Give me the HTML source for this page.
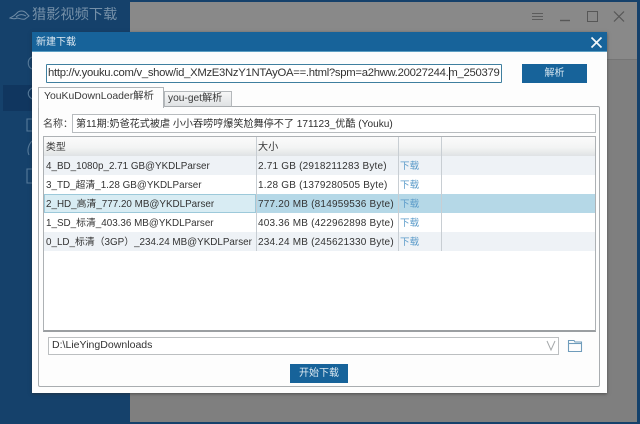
<!DOCTYPE html>
<html lang="zh">
<head>
<meta charset="utf-8">
<style>
html,body{margin:0;padding:0}
body{width:640px;height:424px;overflow:hidden;position:relative;background:#15416b;font-family:"Liberation Sans","Noto Sans CJK SC",sans-serif;font-size:10px;color:#333}
.a{position:absolute;box-sizing:border-box}
.t{position:absolute;white-space:nowrap;line-height:19px;filter:blur(.3px)}
.row{position:absolute;left:1px;width:550px;height:19px}
.c1{left:2px;margin-top:1px;font-size:9.85px}.c2{left:214px;margin-top:1px;letter-spacing:.2px}.c3{left:356px;margin-top:1px;color:#5b9bc9;font-size:9.6px}
.sep{position:absolute;width:1px;background:#c8ced3}
</style>
</head>
<body>
<div class="a" style="left:130px;top:2px;width:507px;height:420px;background:#7f7f7f"></div>
<div class="a" style="left:130px;top:2px;width:507px;height:58px;background:#898989;border-bottom:1px solid #757575"></div>
<div class="a" style="left:3px;top:85px;width:127px;height:26px;background:#10365f"></div>

<svg class="a" style="left:9px;top:8px" width="22" height="14" viewBox="0 0 22 14" fill="none" stroke="#6f8ca6" stroke-width="1"><path d="M1 10C5 8 6 7 9 4C12 2 16 3 18 6L20 8L16 11C13 12 10 10 8 10C6 11 4 11 1 10Z"/><path d="M7 9C10 6 14 6 17 8"/></svg>
<div class="t" style="left:32px;top:6px;font-size:14.2px;color:#7590a8;line-height:18px">猎影视频下载</div>

<svg class="a" style="left:25px;top:55px" width="8" height="130" viewBox="0 0 8 130" fill="none" stroke="#567a9a" stroke-width="1.1"><path d="M7 2C2 4 2 12 7 14"/><path d="M7 33C2 36 2 41 7 44"/><path d="M7 64H2V76H7"/><path d="M7 86C3 90 2 96 4 100"/><path d="M7 114H2V128H7"/></svg>

<svg class="a" style="left:530px;top:9px" width="100" height="15" viewBox="0 0 100 15" fill="none" stroke="#575757" stroke-width="1"><path d="M2 4.5H13M2 7.5H13M2 10.5H13" stroke="#5c5c5c"/><path d="M30 11.5H40" stroke-width="1.4"/><rect x="57.5" y="2.5" width="10" height="10"/><path d="M84 2.5L94 12.5M94 2.5L84 12.5" stroke-width="1.2"/></svg>

<!-- dialog -->
<div class="a" style="left:32px;top:32px;width:575px;height:361px;background:#fdfdfd;box-shadow:0 1px 3px rgba(40,40,40,.55)"></div>
<div class="a" style="left:32px;top:32px;width:575px;height:20px;background:#17639a;border-bottom:1px solid #5d9fc4"></div>
<div class="t" style="left:36px;top:33px;color:#dfeaf2;font-size:10px">新建下载</div>
<svg class="a" style="left:590px;top:36px" width="13" height="13" viewBox="0 0 13 13" fill="none" stroke="#f2f7fa" stroke-width="1.7"><path d="M1.5 1.5L11.5 11.5M11.5 1.5L1.5 11.5"/></svg>

<div class="a" style="left:46px;top:64px;width:456px;height:19px;background:#fff;border:1px solid #3f7f9f;border-radius:1px"></div>
<div class="t" style="left:48px;top:64px;width:453px;overflow:hidden;font-size:11.3px;color:#333;letter-spacing:-.29px">http://v.youku.com/v_show/id_XMzE3NzY1NTAyOA==.html?spm=a2hww.20027244.m_250379</div>
<div class="a" style="left:449px;top:67px;width:1px;height:13px;background:#222"></div>
<div class="a" style="left:522px;top:64px;width:65px;height:19px;background:#17639a"></div>
<div class="t" style="left:522px;top:64px;width:65px;text-align:center;color:#d5e5ef">解析</div>

<!-- tab panel -->
<div class="a" style="left:38px;top:106px;width:562px;height:281px;border:1px solid #a9adb0;border-radius:2px;background:#fdfdfd"></div>
<div class="a" style="left:164px;top:91px;width:68px;height:16px;background:linear-gradient(#f7f7f7,#dfe2e4);border:1px solid #b4b8bb;border-bottom:1px solid #a9adb0"></div>
<div class="t" style="left:168px;top:89px;font-size:10.2px;color:#3a3a3a">you-get解析</div>
<div class="a" style="left:38px;top:87px;width:126px;height:21px;background:#fdfdfd;border:1px solid #b0b4b7;border-bottom:0"></div>
<div class="t" style="left:44px;top:87px;font-size:10.4px;color:#3a3a3a">YouKuDownLoader解析</div>

<div class="t" style="left:43px;top:115px;font-size:10px;color:#444">名称：</div>
<div class="a" style="left:72px;top:114px;width:524px;height:19px;background:#fff;border:1px solid #b8bcbf"></div>
<div class="t" style="left:76px;top:115px;font-size:10.1px;color:#2e2e2e">第11期:奶爸花式被虐 小小吞唠哼爆笑尬舞停不了 171123_优酷 (Youku)</div>

<!-- table -->
<div class="a" style="left:43px;top:136px;width:553px;height:196px;background:#fff;border:1px solid #adb1b4;border-bottom:2px solid #9a9ea1">
  <div class="row" style="top:0;background:linear-gradient(#fbfbfb 0%,#f3f4f4 55%,#dfe2e4 100%);left:0;width:551px"></div>
  <div class="row" style="top:19px;background:#eef2f6;left:0;width:551px"></div>
  <div class="row" style="top:38px;background:#fff;left:0;width:551px"></div>
  <div class="row" style="top:57px;background:#b5d8e7;left:0;width:551px"></div>
  <div class="a" style="left:0;top:57px;width:212px;height:19px;background:#d8ecf3;border:1px solid #9cc9da"></div>
  <div class="row" style="top:76px;background:#fff;left:0;width:551px"></div>
  <div class="row" style="top:95px;background:#eef2f6;left:0;width:551px"></div>
  <div class="sep" style="left:212px;top:0;height:114px"></div>
  <div class="sep" style="left:354px;top:0;height:114px"></div>
  <div class="sep" style="left:397px;top:0;height:114px"></div>
  <div class="t c1" style="top:0">类型</div><div class="t c2" style="top:0">大小</div>
  <div class="t c1" style="top:19px">4_BD_1080p_2.71 GB@YKDLParser</div><div class="t c2" style="top:19px">2.71 GB (2918211283 Byte)</div><div class="t c3" style="top:19px">下载</div>
  <div class="t c1" style="top:38px">3_TD_超清_1.28 GB@YKDLParser</div><div class="t c2" style="top:38px">1.28 GB (1379280505 Byte)</div><div class="t c3" style="top:38px">下载</div>
  <div class="t c1" style="top:57px">2_HD_高清_777.20 MB@YKDLParser</div><div class="t c2" style="top:57px">777.20 MB (814959536 Byte)</div><div class="t c3" style="top:57px">下载</div>
  <div class="t c1" style="top:76px">1_SD_标清_403.36 MB@YKDLParser</div><div class="t c2" style="top:76px">403.36 MB (422962898 Byte)</div><div class="t c3" style="top:76px">下载</div>
  <div class="t c1" style="top:95px">0_LD_标清（3GP）_234.24 MB@YKDLParser</div><div class="t c2" style="top:95px">234.24 MB (245621330 Byte)</div><div class="t c3" style="top:95px">下载</div>
</div>

<!-- path -->
<div class="a" style="left:48px;top:337px;width:511px;height:18px;background:#fff;border:1px solid #bcbfc1"></div>
<div class="t" style="left:52px;top:336px;font-size:10.55px;color:#333">D:\LieYingDownloads</div>
<svg class="a" style="left:545px;top:339px" width="12" height="13" viewBox="0 0 12 13" fill="none" stroke="#a6a9ab" stroke-width="1"><path d="M2 2L6 11L10 2"/></svg>
<svg class="a" style="left:567px;top:339px" width="16" height="14" viewBox="0 0 16 14" fill="none" stroke="#6f9cbb" stroke-width="1.1"><path d="M1.5 12.5V1.5H7L8 3H14.5V12.5Z"/><path d="M1.5 4.5H14.5"/></svg>
<div class="a" style="left:290px;top:364px;width:58px;height:19px;background:#17639a"></div>
<div class="t" style="left:290px;top:364px;width:58px;text-align:center;color:#dce9f1">开始下载</div>
</body>
</html>
